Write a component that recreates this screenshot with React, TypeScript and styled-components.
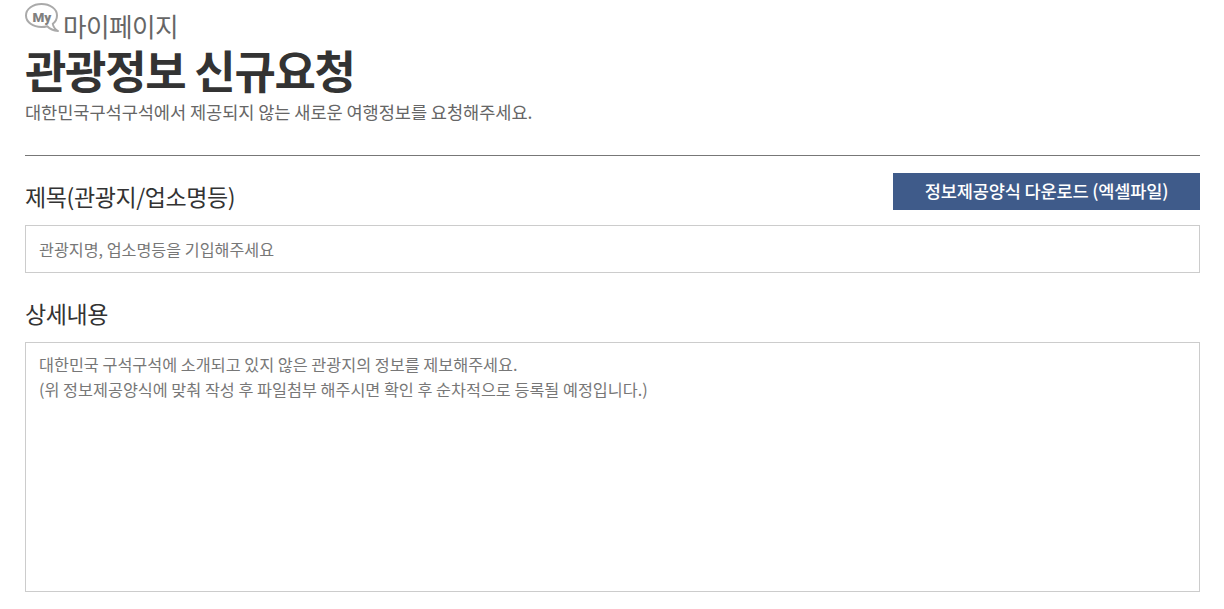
import styled, { createGlobalStyle } from "styled-components";

const GlobalStyle = createGlobalStyle`
  html, body {
    margin: 0;
    padding: 0;
    background: #fff;
    overflow: hidden;
  }

  body {
    font-family: "Noto Sans CJK KR", "Noto Sans", sans-serif;
    color: #333;
  }
`

const Container = styled.div`
  width: 1175px;
  height: 609px;
  margin-left: 25px;
  box-sizing: border-box;
  padding-top: 3px;
`

const Crumb = styled.div`
  display: flex;
  align-items: flex-start;
  height: 37px;
  gap: 4px;
`

const CrumbText = styled.span`
  font-size: 25.6px;
  line-height: 28px;
  letter-spacing: -0.55px;
  color: #666;
  margin-top: 9px;
`

const Title = styled.h1`
  margin: 0;
  font-size: 45px;
  line-height: 59px;
  font-weight: 700;
  letter-spacing: -1.3px;
  color: #333;
`

const Subtitle = styled.p`
  margin: 0;
  font-size: 17.6px;
  line-height: 26px;
  letter-spacing: -0.08px;
  color: #666;
`

const Divider = styled.hr`
  margin: 30px 0 0;
  border: 0;
  height: 1px;
  background: #777;
`

const LabelRow = styled.div`
  display: flex;
  justify-content: space-between;
  align-items: flex-start;
  height: 69px;
  padding-top: 17px;
  box-sizing: border-box;
`

const Label = styled.h2`
  margin: -3px 0 0;
  font-size: 23px;
  line-height: 52px;
  font-weight: 400;
  letter-spacing: -0.4px;
  color: #333;
`

const DownloadButton = styled.button`
  width: 307px;
  height: 37px;
  padding: 0 0 2px;
  border: 0;
  background: #3f5b8a;
  color: #fff;
  font-family: inherit;
  font-size: 17.6px;
  font-weight: 500;
  letter-spacing: -0.2px;
`

const TitleInput = styled.input`
  display: block;
  width: 100%;
  height: 48px;
  box-sizing: border-box;
  padding: 0 13px;
  border: 1px solid #ccc;
  outline: 0;
  font-family: inherit;
  font-size: 16.2px;

  &::placeholder {
    color: #777;
    opacity: 1;
  }
`

const SectionLabel = styled(Label)`
  margin-top: 14px;
`

const DetailInput = styled.textarea`
  display: block;
  width: 100%;
  height: 250px;
  margin-top: 3px;
  box-sizing: border-box;
  padding: 9px 13px;
  border: 1px solid #ccc;
  outline: 0;
  resize: none;
  font-family: inherit;
  font-size: 16.25px;
  line-height: 25px;

  &::placeholder {
    color: #777;
    opacity: 1;
  }
`

const MyBubble = () => (
  <svg width="34" height="30" viewBox="0 0 34 30" fill="none">
    <path
      d="M16.5 1C8 1 1 5.800 1 12.500C1 19.200 8 24 16.500 24C18.500 24 20.500 23.700 22.200 23.200C25 26 28.500 27.500 33 28C30 26.200 28.300 23.800 27.800 20.800C30.500 18.700 32 15.800 32 12.500C32 5.800 25 1 16.500 1Z"
      stroke="#aaa"
      strokeWidth="2"
      strokeLinejoin="round"
    />
    <text x="7.500" y="18.500" fontFamily="Roboto, sans-serif" fontSize="13.500" fontWeight="900" fill="#808080">
      My
    </text>
  </svg>
)

export default function App() {
  return (
    <Container>
      <GlobalStyle />
      <Crumb>
        <MyBubble />
        <CrumbText>마이페이지</CrumbText>
      </Crumb>
      <Title>관광정보 신규요청</Title>
      <Subtitle>대한민국구석구석에서 제공되지 않는 새로운 여행정보를 요청해주세요.</Subtitle>
      <Divider />
      <LabelRow>
        <Label>제목(관광지/업소명등)</Label>
        <DownloadButton>정보제공양식 다운로드 (엑셀파일)</DownloadButton>
      </LabelRow>
      <TitleInput type="text" name="title" placeholder="관광지명, 업소명등을 기입해주세요" />
      <SectionLabel>상세내용</SectionLabel>
      <DetailInput
        name="detail"
        placeholder={"대한민국 구석구석에 소개되고 있지 않은 관광지의 정보를 제보해주세요.\n(위 정보제공양식에 맞춰 작성 후 파일첨부 해주시면 확인 후 순차적으로 등록될 예정입니다.)"}
      />
    </Container>
  )
}
